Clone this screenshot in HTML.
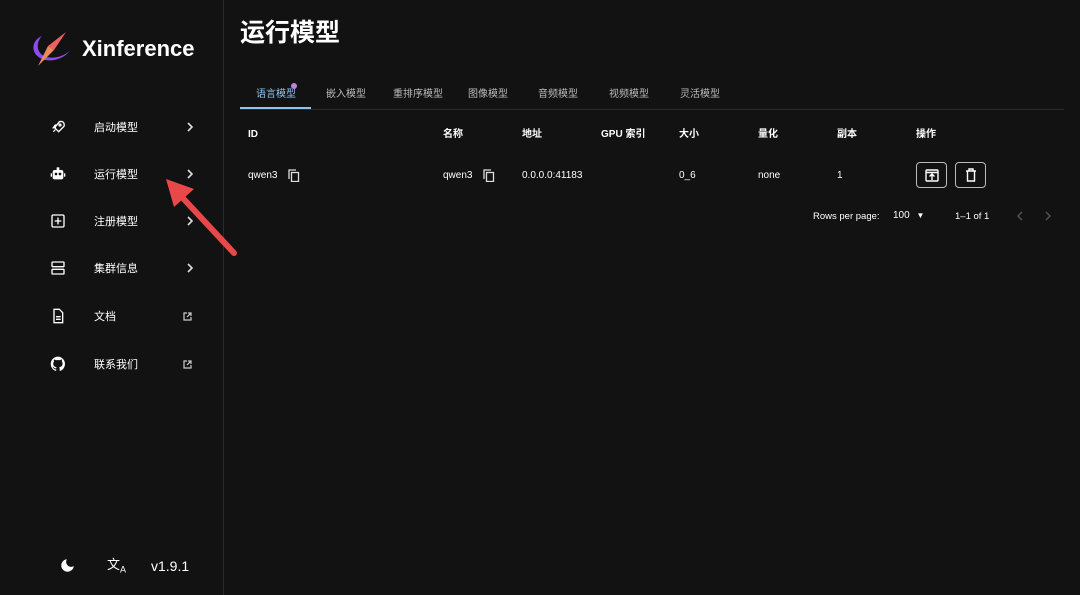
<!DOCTYPE html>
<html><head><meta charset="utf-8"><style>
*{margin:0;padding:0;box-sizing:border-box}
body{width:1080px;height:595px;background:#121212;color:#fff;font-family:"Liberation Sans","Noto Sans CJK SC",sans-serif;position:relative;overflow:hidden}
span,div{line-height:14px}
.side{position:absolute;left:0;top:0;width:224px;height:595px;background:#121212;border-right:1px solid #2a2a2a}
.logo{position:absolute;left:30px;top:28px}
.brand{position:absolute;left:82px;top:37px;font-size:22px;font-weight:bold;line-height:24px}
.nav{position:absolute;left:0;width:224px;height:20px;font-size:11px}
.nav svg.i{position:absolute;left:50px;top:2px}
.nav .t{position:absolute;left:94px;top:4px}
.nav svg.c{position:absolute;left:186px;top:5px}
.nav svg.e{position:absolute;left:183px;top:6px}
.t2{position:absolute;font-size:11px}
h1{position:absolute;left:240px;top:17px;font-size:25px;font-weight:bold;line-height:32px}
.tabs{position:absolute;left:240px;top:80px;width:824px;height:30px;border-bottom:1px solid #2c2c2c;font-size:10px;color:#bbb}
.tabs span{position:absolute;top:8px}
.hd{position:absolute;top:128px;font-size:10px;font-weight:bold}
.cell{position:absolute;top:169px;font-size:10px}
.btn{position:absolute;top:162px;width:31px;height:26px;border:1px solid #bbb;border-radius:4px}
</style></head><body>
<div class="side">
<svg class="logo" width="44" height="42" viewBox="0 0 44 42"><path d="M12 8 C2 12,0 24,10 30 C20 36,36 30,40 22 C36 28,22 32,14 28 C6 24,6 14,12 8Z" fill="#8a4cf0"/><path d="M36 4 L24 22 L18 18Z" fill="#f06060"/><path d="M24 22 L8 38 L18 18Z" fill="#e88a5a"/></svg>
<div class="brand">Xinference</div>
<div class="nav" style="top:117px"><svg class="i" width="16" height="16" viewBox="0 0 24 24" fill="none" stroke="#fff" stroke-width="2"><path d="M5 19l3-3M14 4c4-1 6 1 6 1s2 2 1 6l-8 8-6-6z M9 13l-4 0 3-4 3 0"/><circle cx="15" cy="9" r="1.5"/></svg><span class="t">启动模型</span><svg class="c" width="8" height="10" viewBox="0 0 8 10"><path d="M2 1l4 4-4 4" stroke="#ddd" stroke-width="1.6" fill="none"/></svg></div>
<div class="nav" style="top:164px"><svg class="i" width="16" height="16" viewBox="0 0 24 24" fill="#fff"><rect x="4" y="6" width="16" height="14" rx="3"/><rect x="10" y="2" width="4" height="4"/><circle cx="9" cy="12" r="2" fill="#121212"/><circle cx="15" cy="12" r="2" fill="#121212"/><rect x="1" y="11" width="2" height="5"/><rect x="21" y="11" width="2" height="5"/></svg><span class="t">运行模型</span><svg class="c" width="8" height="10" viewBox="0 0 8 10"><path d="M2 1l4 4-4 4" stroke="#ddd" stroke-width="1.6" fill="none"/></svg></div>
<div class="nav" style="top:211px"><svg class="i" width="16" height="16" viewBox="0 0 24 24" fill="none" stroke="#fff" stroke-width="2"><rect x="3" y="3" width="18" height="18" rx="2"/><path d="M12 7v10M7 12h10"/></svg><span class="t">注册模型</span><svg class="c" width="8" height="10" viewBox="0 0 8 10"><path d="M2 1l4 4-4 4" stroke="#ddd" stroke-width="1.6" fill="none"/></svg></div>
<div class="nav" style="top:258px"><svg class="i" width="16" height="16" viewBox="0 0 24 24" fill="none" stroke="#fff" stroke-width="2"><rect x="3" y="3" width="18" height="7" rx="1"/><rect x="3" y="14" width="18" height="7" rx="1"/></svg><span class="t">集群信息</span><svg class="c" width="8" height="10" viewBox="0 0 8 10"><path d="M2 1l4 4-4 4" stroke="#ddd" stroke-width="1.6" fill="none"/></svg></div>
<div class="nav" style="top:306px"><svg class="i" width="16" height="16" viewBox="0 0 24 24" fill="none" stroke="#fff" stroke-width="2"><path d="M6 2h8l5 5v15H6z M9 13h7M9 17h7"/></svg><span class="t">文档</span><svg class="e" width="9" height="9" viewBox="0 0 9 9" fill="none" stroke="#ccc" stroke-width="1.2"><path d="M4 1H1v7h7V5M5 1h3v3M8 1L4 5"/></svg></div>
<div class="nav" style="top:354px"><svg class="i" width="16" height="16" viewBox="0 0 24 24" fill="#fff"><path d="M12 1a11 11 0 0 0-3.5 21.4c.6.1.8-.2.8-.5v-2c-3.1.7-3.8-1.3-3.8-1.3-.5-1.3-1.2-1.6-1.2-1.6-1-.7.1-.7.1-.7 1.1.1 1.7 1.1 1.7 1.1 1 1.7 2.6 1.2 3.2.9.1-.7.4-1.2.7-1.5-2.5-.3-5.1-1.2-5.1-5.5 0-1.2.4-2.2 1.1-3-.1-.3-.5-1.4.1-3 0 0 .9-.3 3 1.1a10 10 0 0 1 5.5 0c2.1-1.4 3-1.1 3-1.1.6 1.6.2 2.7.1 3 .7.8 1.1 1.8 1.1 3 0 4.3-2.6 5.2-5.1 5.5.4.3.8 1 .8 2v3c0 .3.2.6.8.5A11 11 0 0 0 12 1z"/></svg><span class="t">联系我们</span><svg class="e" width="9" height="9" viewBox="0 0 9 9" fill="none" stroke="#ccc" stroke-width="1.2"><path d="M4 1H1v7h7V5M5 1h3v3M8 1L4 5"/></svg></div>
<svg style="position:absolute;left:60px;top:558px" width="15" height="15" viewBox="0 0 24 24" fill="#fff"><path d="M11 2a10 10 0 1 0 11 11 8 8 0 0 1-11-11z"/></svg>
<span class="t2" style="left:107px;top:558px;font-size:13px">文<sub style="font-size:9px">A</sub></span>
<span class="t2" style="left:151px;top:559px;font-size:14px">v1.9.1</span>
</div>
<svg style="position:absolute;left:160px;top:165px" width="82" height="95"><path d="M74 88 L20 30" stroke="#e84848" stroke-width="6" stroke-linecap="round"/><path d="M6 14 L34 24 L14 42Z" fill="#e84848"/></svg>
<h1>运行模型</h1>
<div class="tabs">
<span style="left:16px;color:#90c4f0">语言模型</span><span style="left:51px;top:3px;width:6px;height:6px;border-radius:3px;background:#c080e0"></span>
<span style="left:86px">嵌入模型</span><span style="left:153px">重排序模型</span><span style="left:228px">图像模型</span><span style="left:298px">音频模型</span><span style="left:369px">视频模型</span><span style="left:440px">灵活模型</span>
<div style="position:absolute;left:0;top:27px;width:71px;height:2px;background:#90c4f0"></div>
</div>
<span class="hd" style="left:248px">ID</span><span class="hd" style="left:443px">名称</span><span class="hd" style="left:522px">地址</span><span class="hd" style="left:601px">GPU 索引</span><span class="hd" style="left:679px">大小</span><span class="hd" style="left:758px">量化</span><span class="hd" style="left:837px">副本</span><span class="hd" style="left:916px">操作</span>
<span class="cell" style="left:248px">qwen3</span><svg style="position:absolute;left:288px;top:169px" width="12" height="13" viewBox="0 0 12 13" fill="none" stroke="#ddd" stroke-width="1.3"><path d="M1 10V1h7"/><rect x="3.5" y="3.5" width="7" height="9"/></svg>
<span class="cell" style="left:443px">qwen3</span><svg style="position:absolute;left:483px;top:169px" width="12" height="13" viewBox="0 0 12 13" fill="none" stroke="#ddd" stroke-width="1.3"><path d="M1 10V1h7"/><rect x="3.5" y="3.5" width="7" height="9"/></svg>
<span class="cell" style="left:522px">0.0.0.0:41183</span><span class="cell" style="left:679px">0_6</span><span class="cell" style="left:758px">none</span><span class="cell" style="left:837px">1</span>
<div class="btn" style="left:916px"><svg style="position:absolute;left:8px;top:6px" width="14" height="13" viewBox="0 0 14 13" fill="none" stroke="#fff" stroke-width="1.4"><rect x="1" y="1" width="12" height="11" rx="1"/><path d="M7 11V5M4.5 7.5L7 5l2.5 2.5M1 3.5h12"/></svg></div>
<div class="btn" style="left:955px"><svg style="position:absolute;left:9px;top:5px" width="12" height="14" viewBox="0 0 12 14" fill="none" stroke="#fff" stroke-width="1.4"><path d="M1 3h10M4 3V1h4v2M2.5 3v10h7V3"/></svg></div>
<span class="cell" style="left:813px;top:210px;font-size:9.5px">Rows per page:</span>
<span class="cell" style="left:893px;top:209px">100 <span style="font-size:8px;margin-left:4px">▼</span></span>
<span class="cell" style="left:955px;top:210px;font-size:9.5px">1–1 of 1</span>
<svg style="position:absolute;left:1016px;top:211px" width="8" height="10" viewBox="0 0 8 10"><path d="M6 1L2 5l4 4" stroke="#555" stroke-width="1.4" fill="none"/></svg>
<svg style="position:absolute;left:1044px;top:211px" width="8" height="10" viewBox="0 0 8 10"><path d="M2 1l4 4-4 4" stroke="#555" stroke-width="1.4" fill="none"/></svg>
</body></html>
